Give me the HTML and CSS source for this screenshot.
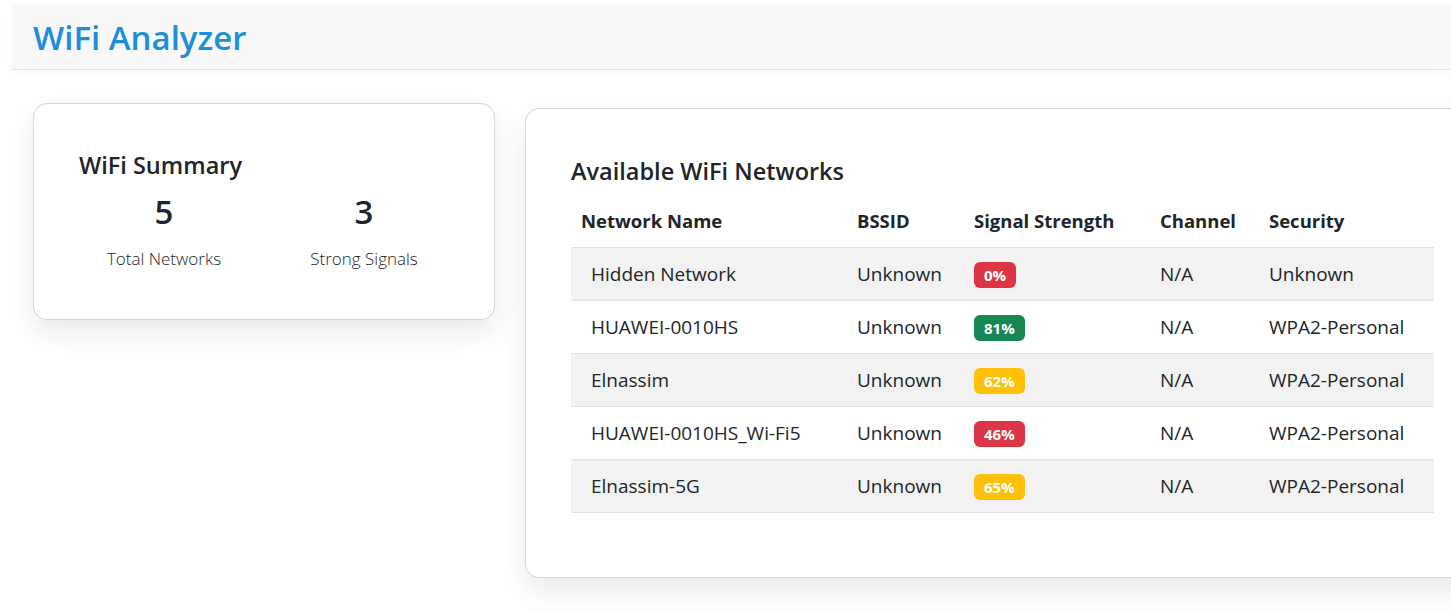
FILE: index.html
```html
<!DOCTYPE html>
<html lang="en">
<head>
<meta charset="utf-8">
<title>WiFi Analyzer</title>
<link rel="stylesheet" href="styles.css">
</head>
<body>
<header class="topbar">
  <h1 class="brand">WiFi Analyzer</h1>
</header>
<main class="layout">
  <section class="card summary">
    <h2 class="card-title summary-title">WiFi Summary</h2>
    <div class="stats">
      <div class="stat">
        <div class="stat-value">5</div>
        <div class="stat-label">Total Networks</div>
      </div>
      <div class="stat">
        <div class="stat-value">3</div>
        <div class="stat-label">Strong Signals</div>
      </div>
    </div>
  </section>
  <section class="card networks">
    <h2 class="card-title">Available WiFi Networks</h2>
    <table class="net-table">
      <thead>
        <tr>
          <th class="c-name">Network Name</th>
          <th class="c-bssid">BSSID</th>
          <th class="c-signal">Signal Strength</th>
          <th class="c-chan">Channel</th>
          <th class="c-sec">Security</th>
        </tr>
      </thead>
      <tbody>
        <tr>
          <td class="name">Hidden Network</td>
          <td>Unknown</td>
          <td><span class="badge bad">0%</span></td>
          <td>N/A</td>
          <td>Unknown</td>
        </tr>
        <tr>
          <td class="name">HUAWEI-0010HS</td>
          <td>Unknown</td>
          <td><span class="badge good">81%</span></td>
          <td>N/A</td>
          <td>WPA2-Personal</td>
        </tr>
        <tr>
          <td class="name">Elnassim</td>
          <td>Unknown</td>
          <td><span class="badge mid">62%</span></td>
          <td>N/A</td>
          <td>WPA2-Personal</td>
        </tr>
        <tr>
          <td class="name">HUAWEI-0010HS_Wi-Fi5</td>
          <td>Unknown</td>
          <td><span class="badge bad">46%</span></td>
          <td>N/A</td>
          <td>WPA2-Personal</td>
        </tr>
        <tr>
          <td class="name">Elnassim-5G</td>
          <td>Unknown</td>
          <td><span class="badge mid">65%</span></td>
          <td>N/A</td>
          <td>WPA2-Personal</td>
        </tr>
      </tbody>
    </table>
  </section>
</main>
</body>
</html>
```
FILE: styles.css
```css
html, body {
  margin: 0;
  padding: 0;
  background: #fff;
  overflow: hidden;
}
body {
  font-family: "Open Sans", "Noto Sans", "Liberation Sans", sans-serif;
  color: #212529;
  padding: 5px 0 0 12px;
  width: 1439px;
  height: 606px;
}
.topbar {
  background: #f8f8f8;
  border-bottom: 1px solid #e3e3e3;
  height: 64px;
  padding-left: 21px;
  display: flex;
  align-items: center;
  box-shadow: 0 4px 14px rgba(0,0,0,0.03);
}
.brand {
  margin: 0;
  color: #1d8fd9;
  font-size: 33px;
  font-weight: 600;
  letter-spacing: 0;
}
.layout {
  display: flex;
  align-items: flex-start;
  gap: 30px;
  padding: 33px 0 0 21px;
  width: 1500px;
}
.card {
  background: #fff;
  border: 1px solid #d6d6d6;
  border-radius: 14px;
  box-shadow: 0 12px 30px rgba(0,0,0,0.09);
  box-sizing: border-box;
}
.card-title {
  margin: 0;
  font-size: 23.5px;
  font-weight: 600;
  color: #212529;
}
.summary {
  width: 462px;
  height: 217px;
  padding: 46px 30px 0 30px;
}
.summary-title {
  padding-left: 15px;
  line-height: 30px;
}
.stats {
  display: flex;
  padding-top: 10px;
}
.stat {
  flex: 1;
  text-align: center;
}
.stat-value {
  font-size: 33px;
  font-weight: 600;
  line-height: 44px;
}
.stat-label {
  font-size: 17px;
  font-weight: 300;
  margin-top: 13px;
  line-height: 24px;
}
.networks {
  margin-top: 5px;
  width: 960px;
  height: 470px;
  padding: 45px 0 0 45px;
}
.networks .card-title {
  line-height: 34px;
  margin-bottom: 10px;
}
.net-table {
  border-collapse: collapse;
  width: 863px;
  font-size: 19px;
}
.net-table th {
  text-align: left;
  font-weight: 700;
  font-size: 18.5px;
  height: 45px;
  padding: 0 10px 4px;
  border-bottom: 1px solid #dee2e6;
  vertical-align: middle;
}
.net-table td {
  height: 52px;
  padding: 0 10px;
  border-bottom: 1px solid #dee2e6;
  vertical-align: middle;
}
.net-table tbody tr:nth-child(odd) td {
  background: #f2f2f2;
}
.net-table td.name {
  padding-left: 20px;
}
.c-name { width: 256px; }
.c-bssid { width: 97px; }
.c-signal { width: 166px; }
.c-chan { width: 89px; }
.badge {
  display: inline-block;
  color: #fff;
  font-weight: 700;
  font-size: 15px;
  line-height: 26px;
  padding: 0 10px;
  border-radius: 6px;
  vertical-align: middle;
}
.bad { background: #dc3545; }
.good { background: #198754; }
.mid { background: #ffc107; }
```
